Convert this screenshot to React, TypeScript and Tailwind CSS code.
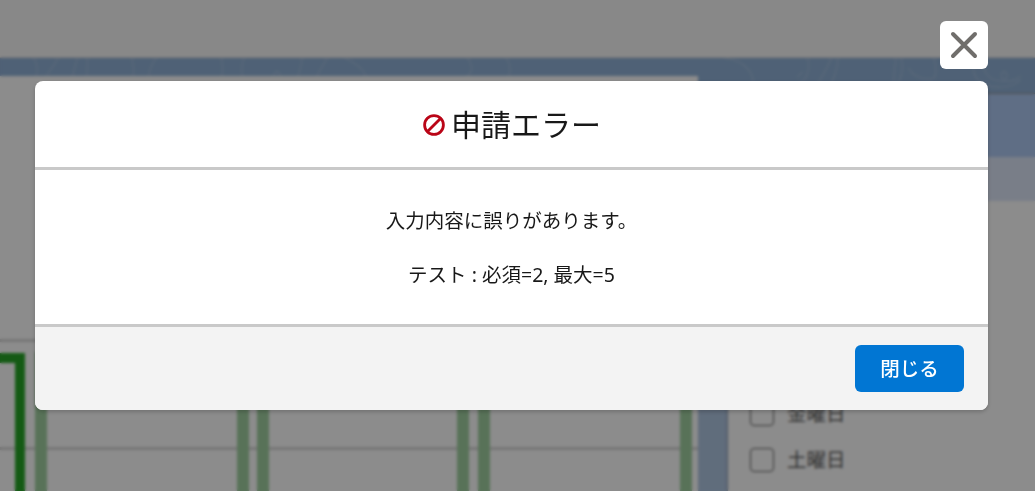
const fontStack = '[font-family:"Noto_Sans","Noto_Sans_CJK_JP",sans-serif]'

const weekdays = ['月曜日', '火曜日', '水曜日', '木曜日', '金曜日', '土曜日']

// green bars behind the dialog
const fadedBars = [35, 237, 257, 457, 478, 680]

function Topography() {
  return (
    <svg className="absolute inset-0 h-full w-full" viewBox="0 0 1035 36" fill="none" stroke="#ffffff" strokeOpacity="0.2" strokeWidth="1.2">
      <path d="M20 0c6 10 4 20-4 30M45 0c-4 8-8 12-12 18M65 0c-4 12-6 24-10 36M75 0c0 12 0 24-2 36" />
      <path d="M95 36c20-4 32-4 26-36M140 36c-4-14-2-26 6-36M165 36c4-10 30-14 40-12 10 2 10-10 8-24" />
      <path d="M236 0c-4 12-2 24 4 30 6 4 10 0 12-6M270 14a3 4 0 1 0 .1 0M280 36c10-8 14-20 16-36M300 36c8-10 14-24 22-36" />
      <path d="M340 0c20 10 30 20 12 36M420 36c4-12 30-14 42-16 10-2 10-12 4-20M500 36c8-14 14-24 6-36" />
      <path d="M730 0c20 2 30 14 30 26 0 4 0 8-2 10M790 36c20-10 30-14 26-36M805 20l6-6M820 36c8-12 16-24 20-36M835 36c6-10 12-24 12-36" />
      <path d="M860 36c20-6 40-4 50-12 4-8 4-16 2-24M905 36c-2-12 0-24 2-36M920 10c2 8 14 12 22 12 8 0 6-12 4-22" />
      <path d="M990 0c-8 14-2 30 24 30 10 0 18-4 21-8M1000 0c-6 12 0 24 18 24 8 0 14-2 17-6M1018 14a3 4 0 1 0 .1 0" />
    </svg>
  )
}

function Chart() {
  return (
    <svg className="block" width="698" height="161" viewBox="0 0 698 161">
      <rect x="0" y="9" width="698" height="3" fill="#d6d6d6" />
      <rect x="0" y="117" width="698" height="3" fill="#d6d6d6" />
      <path d="M0 28H20V161" fill="none" stroke="#26a526" strokeWidth="10" />
      {fadedBars.map((x) => (
        <rect key={x} x={x} y="22" width="12" height="139" fill="#a0d0a0" />
      ))}
    </svg>
  )
}

function Sidebar() {
  return (
    <aside className="mt-[36px] flex h-[397px] w-[307px] flex-col bg-white shadow-[-1px_0_2px_rgba(0,0,0,0.25)]">
      <div className="h-[63px] bg-[#adc8f2]" />
      <div className="h-[44px] bg-[#dde6f8]" />
      <ul className="flex flex-col gap-[22px] pl-[22px] pt-[17px]">
        {weekdays.map((day) => (
          <li key={day} className="flex h-[24px] items-center gap-[13px] text-[19.5px] text-[#5c5c5c]">
            <span className="h-[24px] w-[24px] rounded border-[1.5px] border-[#5c5c5c]" />
            {day}
          </li>
        ))}
      </ul>
    </aside>
  )
}

function ErrorDialog() {
  return (
    <div className="fixed inset-0 flex flex-col items-end bg-black/45 pr-[47px] pt-[21px] backdrop-blur-[1.5px]">
      <button className="mb-[12px] flex h-[48px] w-[48px] items-center justify-center rounded-md bg-white">
        <svg width="28" height="28" viewBox="0 0 28 28" stroke="#706e6b" strokeWidth="4" strokeLinecap="round">
          <path d="M3 3l22 22M25 3L3 25" />
        </svg>
      </button>

      <div className="w-[953px] overflow-hidden rounded-lg bg-white shadow-[0_2px_4px_rgba(0,0,0,0.2)]">
        {/* Header */}
        <div className="flex h-[89px] items-center justify-center gap-[6px] border-b-[3px] border-[#c9c9c9] pl-[1px] pt-[1px]">
          <svg width="22" height="22" viewBox="0 0 22 22" fill="none" stroke="#ba0517" strokeWidth="2.8">
            <circle cx="11" cy="11" r="9.4" />
            <path d="M4.5 17.5l13-13" />
          </svg>
          <h2 className="text-[30px] leading-none text-[#181818]">申請エラー</h2>
        </div>

        {/* Body */}
        <div className="flex h-[157px] flex-col items-center gap-[27px] border-b-[3px] border-[#c9c9c9] pt-[37px] text-[19.5px] leading-[27px] text-[#181818]">
          <p>入力内容に誤りがあります。</p>
          <p>テスト : 必須=2, 最大=5</p>
        </div>

        {/* Footer */}
        <div className="flex h-[83px] items-start justify-end bg-[#f3f3f3] pr-[24px] pt-[18px]">
          <button className="h-[47px] w-[109px] rounded-md bg-[#0176d3] text-[19.5px] font-medium text-white">
            閉じる
          </button>
        </div>
      </div>
    </div>
  )
}

export default function App() {
  return (
    <div className={`h-[491px] overflow-hidden bg-white ${fontStack}`}>
      <header className="h-[58px] border-b border-[#dcdcdc] bg-[#f8f8f8]" />
      <main className="relative flex h-[433px] justify-between bg-[#b0c6e2]">
        <div className="absolute inset-x-0 top-0 h-[36px] border-b border-[#a0a0a0] bg-[#90b1d7]">
          <Topography />
        </div>
        <section className="relative mt-[18px] h-[415px] w-[698px] bg-white pt-[254px]">
          <Chart />
        </section>
        <div className="relative">
          <Sidebar />
        </div>
      </main>
      <ErrorDialog />
    </div>
  )
}
